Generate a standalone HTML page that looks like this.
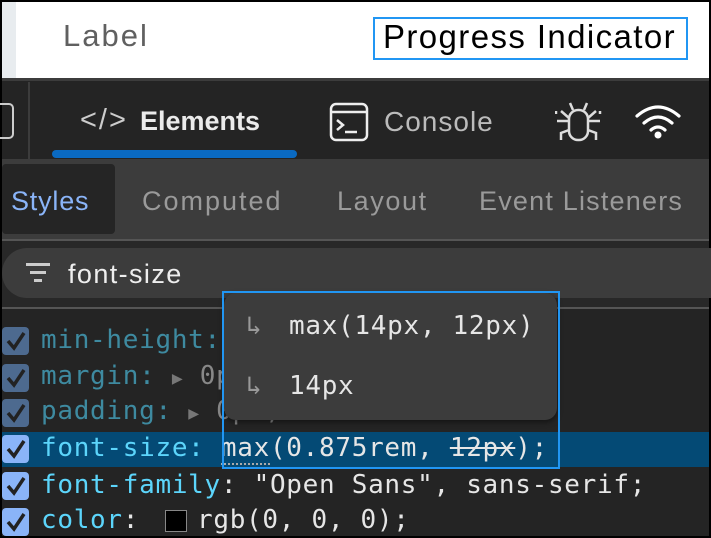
<!DOCTYPE html>
<html><head><style>
*{margin:0;padding:0;box-sizing:border-box}
body{width:711px;height:538px;overflow:hidden;background:#000;position:relative;font-family:"Liberation Sans",sans-serif}
.a{position:absolute}
.mono{font-family:"DejaVu Sans Mono","Liberation Mono",monospace;font-size:26px;white-space:pre;letter-spacing:0.7px}
.ui{font-family:"Liberation Sans",sans-serif;white-space:nowrap}
.cb{position:absolute;left:2px;width:27px;height:28px;border-radius:4px;background:#8ab4f8}
.cb svg{position:absolute;left:3px;top:4px}
.dim{background:#4d6a8f}
</style></head><body>
<div class="a" style="left:2px;top:2px;width:707px;height:76px;background:#fff"></div>
<div class="a" style="left:2px;top:2px;width:14px;height:76px;background:#e8ecef"></div>
<div class="a ui" style="left:63px;top:18px;font-size:31px;color:#606060;letter-spacing:2px">Label</div>
<div class="a" style="left:373px;top:17px;width:315px;height:43px;border:2px solid #2196f3"></div>
<div class="a ui" style="left:383px;top:18px;font-size:33px;color:#000;letter-spacing:1.4px">Progress Indicator</div>

<div class="a" style="left:2px;top:78px;width:707px;height:3px;background:#3c3c3c"></div>
<div class="a" style="left:2px;top:81px;width:707px;height:78px;background:#242424"></div>
<div class="a" style="left:-10px;top:103px;width:24px;height:36px;border:2px solid #ccc;border-radius:5px"></div>
<div class="a" style="left:28px;top:82px;width:2px;height:77px;background:#3c3c3c"></div>
<div class="a ui" style="left:80px;top:104px;font-size:29px;color:#ccc;letter-spacing:2px">&lt;/&gt;</div>
<div class="a ui" style="left:140px;top:106px;font-size:27px;color:#ebebeb;font-weight:bold">Elements</div>
<div class="a" style="left:52px;top:150px;width:245px;height:8px;border-radius:4px;background:#0a6ac2"></div>
<svg class="a" style="left:329px;top:102px" width="42" height="40"><rect x="2" y="2" width="36" height="36" rx="5" fill="none" stroke="#eee" stroke-width="2.5"/><line x1="2" y1="10" x2="38" y2="10" stroke="#eee" stroke-width="2.5"/><path d="M8 18 l6 5 l-6 5 M16 30 h12" stroke="#eee" stroke-width="2.5" fill="none"/></svg>
<div class="a ui" style="left:384px;top:106px;font-size:28px;color:#bbb;letter-spacing:1px">Console</div>
<svg class="a" style="left:555px;top:100px" width="48" height="42" fill="none" stroke="#ddd" stroke-width="2.5"><rect x="14" y="10" width="19" height="30" rx="9"/><path d="M18 10 l-3-7 M29 10 l3-7 M14 21 H2 M33 21 h12 M1 14 v-3 M45 14 v-3 M14 30 l-8 3 v7 M33 30 l8 3 v7 M6 11 l8 7 M41 11 l-8 7"/></svg>
<svg class="a" style="left:634px;top:102px" width="48" height="38" fill="none" stroke="#fff" stroke-width="3.2" stroke-linecap="round"><path d="M3 14 Q24 -4 45 14 M10 21 Q24 9 38 21 M17 28 Q24 22 31 28"/><circle cx="24" cy="33" r="3.5" fill="#fff" stroke="none"/></svg>

<div class="a" style="left:2px;top:159px;width:707px;height:80px;background:#3c3c3c"></div>
<div class="a" style="left:2px;top:164px;width:113px;height:70px;background:#252525;border-radius:4px"></div>
<div class="a ui" style="left:11px;top:186px;font-size:27px;color:#8ab4f8;letter-spacing:0.8px">Styles</div>
<div class="a ui" style="left:142px;top:186px;font-size:27px;color:#9a9a9a;letter-spacing:2px">Computed</div>
<div class="a ui" style="left:337px;top:186px;font-size:27px;color:#9a9a9a;letter-spacing:1.6px">Layout</div>
<div class="a ui" style="left:479px;top:186px;font-size:27px;color:#9a9a9a;letter-spacing:1.2px">Event Listeners</div>
<div class="a" style="left:2px;top:239px;width:707px;height:2px;background:#555"></div>
<div class="a" style="left:2px;top:241px;width:707px;height:67px;background:#282828"></div>
<div class="a" style="left:2px;top:248px;width:760px;height:50px;background:#3c3c3c;border-radius:25px"></div>
<div class="a" style="left:26px;top:263px;width:24px;height:3px;background:#ccc"></div>
<div class="a" style="left:30px;top:271px;width:16px;height:3px;background:#ccc"></div>
<div class="a" style="left:34px;top:279px;width:8px;height:3px;background:#ccc"></div>
<div class="a ui" style="left:68px;top:259px;font-size:27px;color:#eee;letter-spacing:1.4px">font-size</div>
<div class="a" style="left:2px;top:307px;width:707px;height:2px;background:#555"></div>
<div class="a" style="left:2px;top:309px;width:707px;height:227px;background:#242424"></div>

<div class="a" style="left:2px;top:432px;width:707px;height:35px;background:#044a75"></div>
<div class="cb dim" style="top:327px"><svg width="22" height="20"><path d="M3 10 l6 7 l10-15" stroke="#222" stroke-width="3.5" fill="none"/></svg></div>
<div class="cb dim" style="top:364px"><svg width="22" height="20"><path d="M3 10 l6 7 l10-15" stroke="#222" stroke-width="3.5" fill="none"/></svg></div>
<div class="cb dim" style="top:399px"><svg width="22" height="20"><path d="M3 10 l6 7 l10-15" stroke="#222" stroke-width="3.5" fill="none"/></svg></div>
<div class="cb" style="top:435px"><svg width="22" height="20"><path d="M3 10 l6 7 l10-15" stroke="#222" stroke-width="3.5" fill="none"/></svg></div>
<div class="cb" style="top:472px"><svg width="22" height="20"><path d="M3 10 l6 7 l10-15" stroke="#222" stroke-width="3.5" fill="none"/></svg></div>
<div class="cb" style="top:508px"><svg width="22" height="20"><path d="M3 10 l6 7 l10-15" stroke="#222" stroke-width="3.5" fill="none"/></svg></div>

<div class="a mono" style="left:41px;top:325px;color:#3e8aa0">min-height:</div>
<div class="a mono" style="left:41px;top:361px;color:#3e8aa0">margin: <span style="color:#777;font-size:18px">▶</span> <span style="color:#888">0px</span></div>
<div class="a mono" style="left:41px;top:396px;color:#3e8aa0">padding: <span style="color:#777;font-size:18px">▶</span> <span style="color:#888">0px;</span></div>
<div class="a mono" style="left:41px;top:433px;color:#5cd5fb">font-size: <span style="color:#e6e6e6"><span style="border-bottom:2px dotted #aaa">max</span>(0.875rem, <s>12px</s>);</span></div>
<div class="a mono" style="left:41px;top:470px;color:#5cd5fb">font-family<span style="color:#e6e6e6">: "Open Sans", sans-serif;</span></div>
<div class="a mono" style="left:41px;top:505px;color:#5cd5fb">color<span style="color:#e6e6e6">: </span></div>
<div class="a" style="left:165px;top:510px;width:22px;height:22px;background:#000;border:1px solid #888"></div>
<div class="a mono" style="left:197px;top:505px;color:#e6e6e6">rgb(0, 0, 0);</div>

<div class="a" style="left:224px;top:293px;width:333px;height:127px;background:#3c3c3c;border-radius:12px;box-shadow:0 2px 6px rgba(0,0,0,.5)"></div>
<div class="a mono" style="left:246px;top:311px;color:#999">↳</div>
<div class="a mono" style="left:289px;top:311px;color:#e6e6e6">max(14px, 12px)</div>
<div class="a mono" style="left:246px;top:371px;color:#999">↳</div>
<div class="a mono" style="left:289px;top:371px;color:#e6e6e6">14px</div>
<div class="a" style="left:222px;top:291px;width:338px;height:178px;border:2px solid #2196f3"></div>
</body></html>
